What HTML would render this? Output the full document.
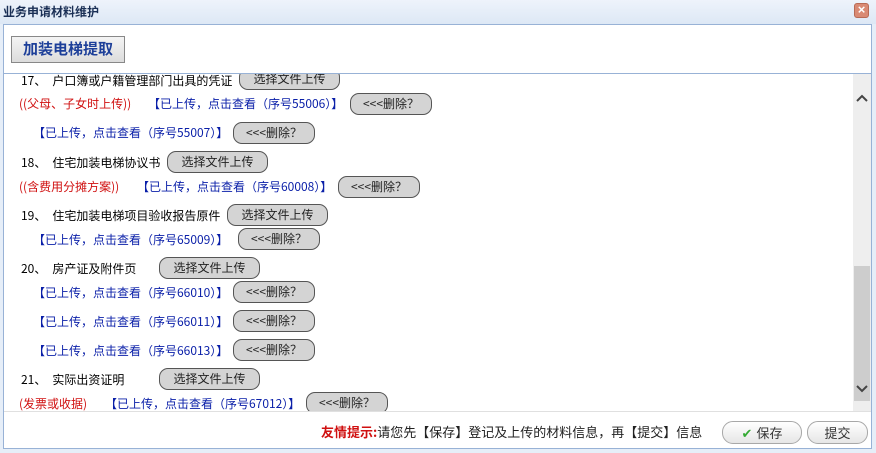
<!DOCTYPE html>
<html><head><meta charset="utf-8"><style>
*{margin:0;padding:0;box-sizing:border-box}
body{width:876px;height:453px;overflow:hidden;background:#e6eef8;font-family:"Liberation Serif","Noto Sans CJK SC",sans-serif;font-size:12px;color:#000;position:relative}
#tb{position:absolute;left:0;top:0;width:876px;height:24px;background:linear-gradient(#eef3fb,#dde8f5);}
#tb .t{position:absolute;left:3px;top:3px;font-weight:bold;font-size:12px;color:#1a2f55;font-family:"Liberation Sans","Noto Sans CJK SC",sans-serif}
#x{position:absolute;left:854px;top:3px;width:15px;height:15px;background:#d98a74;border:1px solid #b86a55;border-radius:3px;color:#fff;font:bold 13px/12px "Liberation Sans",sans-serif;text-align:center}
#panel{position:absolute;left:3px;top:24px;width:869px;height:425px;background:#fff;border:1px solid #98b2d6}
#hd{position:absolute;left:0;top:0;width:867px;height:49px;border-bottom:1px solid #98b2d6}
#hb{position:absolute;left:7px;top:11px;width:114px;height:27px;background:linear-gradient(#f4f4f4,#dcdcdc);border:1px solid #888;color:#1d3f99;font-weight:bold;font-size:15px;text-align:center;line-height:25px;font-family:"Liberation Sans","Noto Sans CJK SC",sans-serif}
#ct{position:absolute;left:0;top:49px;width:849px;height:337px;overflow:hidden}
#sb{position:absolute;left:849px;top:49px;width:18px;height:337px;background:#eeeeee}
#thumb{position:absolute;left:1px;top:192px;width:16px;height:135px;background:#cdcdcd}
#sb svg{position:absolute;left:3px}
.r{position:absolute;white-space:nowrap;font-family:"Noto Sans CJK SC",sans-serif;font-size:12px;line-height:14px}
.btn{position:absolute;height:22px;border:1px solid #555;border-radius:9px;background:#d4d4d4;display:flex;align-items:center;justify-content:center;font-family:"Noto Sans CJK SC",sans-serif;font-size:12px;line-height:12px;color:#222;padding-bottom:1px}
.red{color:#d01010}.blue{color:#0a1fa8}
#ft{position:absolute;left:0;top:386px;width:867px;height:37px;border-top:1px solid #e0e0e0}
.fb{position:absolute;top:9px;height:23px;border:1px solid #a8a8a8;border-radius:11px;background:linear-gradient(#fff,#e6e6e6);display:flex;align-items:center;justify-content:center;font-family:"Noto Sans CJK SC",sans-serif;font-size:13px;line-height:13px;color:#333}
</style></head><body>
<div id="tb"><span class="t">业务申请材料维护</span><div id="x">×</div></div>
<div id="panel">
 <div id="hd"><div id="hb">加装电梯提取</div></div>
 <div id="ct">
  <div class="r" style="left:17px;top:0px">17、　户口簿或户籍管理部门出具的凭证</div>
  <div class="btn" style="left:235px;top:-6px;width:101px">选择文件上传</div>
  <div class="r red" style="left:15px;top:23px">((父母、子女时上传))</div>
  <div class="r blue" style="left:144px;top:23px">【已上传，点击查看（序号55006）】</div>
  <div class="btn" style="left:346px;top:19px;width:82px">&lt;&lt;&lt;删除？</div>
  <div class="r blue" style="left:29px;top:52px">【已上传，点击查看（序号55007）】</div>
  <div class="btn" style="left:229px;top:48px;width:82px">&lt;&lt;&lt;删除？</div>
  <div class="r" style="left:17px;top:82px">18、　住宅加装电梯协议书</div>
  <div class="btn" style="left:163px;top:77px;width:101px">选择文件上传</div>
  <div class="r red" style="left:15px;top:106px">((含费用分摊方案))</div>
  <div class="r blue" style="left:133px;top:106px">【已上传，点击查看（序号60008）】</div>
  <div class="btn" style="left:334px;top:102px;width:82px">&lt;&lt;&lt;删除？</div>
  <div class="r" style="left:17px;top:135px">19、　住宅加装电梯项目验收报告原件</div>
  <div class="btn" style="left:223px;top:130px;width:101px">选择文件上传</div>
  <div class="r blue" style="left:29px;top:159px">【已上传，点击查看（序号65009）】</div>
  <div class="btn" style="left:234px;top:154px;width:82px">&lt;&lt;&lt;删除？</div>
  <div class="r" style="left:17px;top:188px">20、　房产证及附件页</div>
  <div class="btn" style="left:155px;top:183px;width:101px">选择文件上传</div>
  <div class="r blue" style="left:29px;top:212px">【已上传，点击查看（序号66010）】</div>
  <div class="btn" style="left:229px;top:207px;width:82px">&lt;&lt;&lt;删除？</div>
  <div class="r blue" style="left:29px;top:241px">【已上传，点击查看（序号66011）】</div>
  <div class="btn" style="left:229px;top:236px;width:82px">&lt;&lt;&lt;删除？</div>
  <div class="r blue" style="left:29px;top:270px">【已上传，点击查看（序号66013）】</div>
  <div class="btn" style="left:229px;top:265px;width:82px">&lt;&lt;&lt;删除？</div>
  <div class="r" style="left:17px;top:299px">21、　实际出资证明</div>
  <div class="btn" style="left:155px;top:294px;width:101px">选择文件上传</div>
  <div class="r red" style="left:15px;top:323px">(发票或收据)</div>
  <div class="r blue" style="left:101px;top:323px">【已上传，点击查看（序号67012）】</div>
  <div class="btn" style="left:302px;top:318px;width:82px">&lt;&lt;&lt;删除？</div>
 </div>
 <div id="sb">
  <svg style="top:20px" width="12" height="8"><path d="M1 7 L6 2 L11 7" stroke="#444" stroke-width="2" fill="none"/></svg>
  <div id="thumb"></div>
  <svg style="top:311px" width="12" height="8"><path d="M1 1 L6 6 L11 1" stroke="#444" stroke-width="2" fill="none"/></svg>
 </div>
 <div id="ft">
  <div class="r" style="left:317px;top:12px;font-size:13px;line-height:15px"><span class="red" style="font-weight:bold">友情提示:</span><span style="color:#222">请您先【保存】登记及上传的材料信息，再【提交】信息</span></div>
  <div class="fb" style="left:718px;width:80px"><span style="color:#3a3;margin-right:4px">✔</span>保存</div>
  <div class="fb" style="left:803px;width:61px">提交</div>
 </div>
</div>
</body></html>
